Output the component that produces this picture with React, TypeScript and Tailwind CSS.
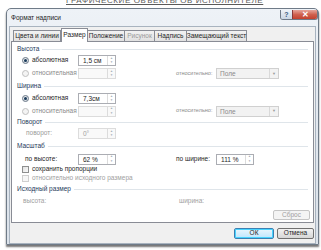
import React from 'react';

const tabs = [
  { label: 'Цвета и линии', w: 'w-[48px]' },
  { label: 'Размер', w: 'w-[27px]', active: true },
  { label: 'Положение', w: 'w-[37px]' },
  { label: 'Рисунок', w: 'w-[30px]', disabled: true },
  { label: 'Надпись', w: 'w-[32px]' },
  { label: 'Замещающий текст', w: 'w-[60px]' },
];

function Section({ title, h }: { title: string; h: string }) {
  return (
    <div className={`${h} flex items-center pl-[5px] pr-[5px]`}>
      <span className="whitespace-nowrap text-[#1e395b]">{title}</span>
      <div className="ml-[3px] h-px flex-1 bg-[#dfe5ea]" />
    </div>
  );
}

function Radio({ checked, disabled }: { checked?: boolean; disabled?: boolean }) {
  return (
    <span
      className={`flex h-[7px] w-[7px] shrink-0 items-center justify-center rounded-full border ${
        disabled ? 'border-[#c0c0c0] bg-[#f4f4f4]' : 'border-[#6a7888] bg-gradient-to-br from-[#f0f0f0] to-[#cfd6dd]'
      }`}
    >
      {checked && <span className="h-[3px] w-[3px] rounded-full bg-[#1a3a5a]" />}
    </span>
  );
}

function Check({ disabled }: { disabled?: boolean }) {
  return (
    <span
      className={`block h-[7px] w-[7px] shrink-0 border ${
        disabled ? 'border-[#cfcfcf] bg-[#f7f7f7]' : 'border-[#8e8f8f] bg-gradient-to-br from-[#e2e2e2] to-[#fafafa]'
      }`}
    />
  );
}

function Spin({ value, disabled, w = 'w-[38px]' }: { value?: string; disabled?: boolean; w?: string }) {
  return (
    <div
      className={`flex h-[11px] shrink-0 ${w} border ${
        disabled ? 'border-[#dcdcdc] bg-[#f9f9f9]' : 'border-[#abadb3] bg-white'
      }`}
    >
      <span
        className={`flex-1 whitespace-nowrap pl-[4px] leading-[9px] ${
          disabled ? 'text-[#a0a0a0]' : 'text-[#1e1e1e]'
        }`}
      >
        {value}
      </span>
      <div className="flex w-[8px] flex-col border-l border-[#dcdcdc]">
        <span className="flex flex-1 items-center justify-center text-[3px] leading-none text-[#a5adb6]">▲</span>
        <span className="flex flex-1 items-center justify-center text-[3px] leading-none text-[#a5adb6]">▼</span>
      </div>
    </div>
  );
}

function Select({ value }: { value: string }) {
  return (
    <div className="flex h-[11px] w-[63px] shrink-0 border border-[#d0d0d0] bg-[#f2f2f2]">
      <span className="flex-1 pl-[3px] leading-[9px] text-[#8a8a8a]">{value}</span>
      <span className="flex w-[9px] items-center justify-center border-l border-[#d9d9d9] text-[4px] text-[#9a9a9a]">
        ▼
      </span>
    </div>
  );
}

export default function App() {
  return (
    <div
      className="relative h-[250px] w-[321px] overflow-hidden bg-white text-[6.5px] leading-none text-[#262626]"
      style={{ fontFamily: '"Liberation Sans", Arial, sans-serif' }}
    >
      {/* document text behind the dialog */}
      <div className="h-[8px] overflow-hidden pl-[66px]">
        <div className="-mt-[3px] whitespace-nowrap text-[8px] tracking-[0.6px] text-[#5a5a5a] underline">
          ГРАФИЧЕСКИЕ ОБЪЕКТЫ ОБ ИСПОЛНИТЕЛЕ
        </div>
      </div>

      {/* dialog window */}
      <div className="ml-[6px] flex h-[237px] w-[313px] flex-col rounded-t-[5px] border border-[#6f7b88] bg-gradient-to-b from-[#eef2f7] via-[#e2e8ef] to-[#dbe2ea] shadow-[0_2px_2px_rgba(0,0,0,0.55)]">
        {/* title bar */}
        <div className="flex h-[17px] items-start">
          <span className="mt-[6px] pl-[4px] text-[#1e1e1e]">Формат надписи</span>
          <div className="ml-auto mt-[1px] flex h-[10px] overflow-hidden rounded-b-[3px] border border-t-0 border-[#6f7b88]">
            <span className="flex w-[11px] items-center justify-center bg-gradient-to-b from-[#eef3f8] to-[#c9d6e4] text-[7px] font-bold text-[#3b5d82]">
              ?
            </span>
            <span className="flex w-[25px] items-center justify-center border-l border-[#8a3a3a] bg-gradient-to-b from-[#e6a59b] via-[#d0614f] to-[#c3412e] text-[8px] font-bold text-white">
              ✕
            </span>
          </div>
        </div>

        {/* client area */}
        <div className="mx-[2px] flex flex-1 flex-col border border-[#a8b3bf] bg-[#f0f0f0]">
          {/* tabs */}
          <div className="flex h-[14px] items-end pl-[3px] pt-[1px]">
            {tabs.map((t) =>
              t.active ? (
                <div
                  key={t.label}
                  className={`${t.w} relative z-10 -mb-px flex h-[14px] items-center justify-center whitespace-nowrap border border-b-0 border-[#898c95] bg-white`}
                >
                  {t.label}
                </div>
              ) : (
                <div
                  key={t.label}
                  className={`${t.w} flex h-[11px] items-center justify-center whitespace-nowrap border border-b-0 border-l-0 border-[#898c95] bg-gradient-to-b from-[#f2f2f2] to-[#e1e1e1] first:border-l ${
                    t.disabled ? 'text-[#9a9a9a]' : ''
                  }`}
                >
                  {t.label}
                </div>
              )
            )}
          </div>

          {/* tab panel */}
          <div className="mx-[1px] flex h-[182px] flex-col border border-[#898c95] bg-white pt-[2px]">
            <Section title="Высота" h="h-[10px]" />
            <div className="flex h-[13px] items-center pl-[10px]">
              <Radio checked />
              <span className="ml-[3px] w-[46px]">абсолютная</span>
              <Spin value="1,5 см" />
            </div>
            <div className="flex h-[13px] items-center pl-[10px]">
              <Radio disabled />
              <span className="ml-[3px] w-[46px] text-[#8a8a8a]">относительная</span>
              <Spin disabled />
              <span className="ml-[60px] w-[40px] whitespace-nowrap text-[5.5px] text-[#8a8a8a]">относительно:</span>
              <Select value="Поле" />
            </div>

            <Section title="Ширина" h="h-[12px]" />
            <div className="flex h-[13px] items-center pl-[10px]">
              <Radio checked />
              <span className="ml-[3px] w-[46px]">абсолютная</span>
              <Spin value="7,3см" />
            </div>
            <div className="flex h-[12px] items-center pl-[10px]">
              <Radio disabled />
              <span className="ml-[3px] w-[46px] text-[#8a8a8a]">относительная</span>
              <Spin disabled />
              <span className="ml-[60px] w-[40px] whitespace-nowrap text-[5.5px] text-[#8a8a8a]">относительно:</span>
              <Select value="Поле" />
            </div>

            <Section title="Поворот" h="h-[11px]" />
            <div className="flex h-[11px] items-center pl-[14px]">
              <span className="w-[52px] text-[#9a9a9a]">поворот:</span>
              <Spin value="0°" disabled />
            </div>

            <Section title="Масштаб" h="h-[14px]" />
            <div className="flex h-[12px] items-center pl-[13px]">
              <span className="w-[53px]">по высоте:</span>
              <Spin value="62 %" />
              <span className="ml-[60px] w-[40px] whitespace-nowrap">по ширине:</span>
              <Spin value="111 %" />
            </div>
            <div className="flex h-[9px] items-center pl-[10px]">
              <Check />
              <span className="ml-[3px]">сохранить пропорции</span>
            </div>
            <div className="flex h-[9px] items-center pl-[10px]">
              <Check disabled />
              <span className="ml-[3px] text-[#a0a0a0]">относительно исходного размера</span>
            </div>

            <Section title="Исходный размер" h="h-[13px]" />
            <div className="flex h-[10px] items-center pl-[11px] text-[#a0a0a0]">
              <span className="w-[156px]">высота:</span>
              <span>ширина:</span>
            </div>
            <div className="mt-[4px] flex h-[10px] justify-end pr-[3px]">
              <div className="flex w-[37px] items-center justify-center rounded-[2px] border border-[#c5c5c5] bg-[#f4f4f4] text-[#a0a0a0]">
                Сброс
              </div>
            </div>
          </div>

          {/* dialog buttons */}
          <div className="flex flex-1 items-center justify-end gap-[3px] pr-[1px]">
            <div className="flex h-[11px] w-[40px] items-center justify-center rounded-[2px] border border-[#3c7fb1] bg-gradient-to-b from-[#eaf6fd] to-[#bee6fd] shadow-[inset_0_0_0_1px_#48d3fe]">
              ОК
            </div>
            <div className="flex h-[11px] w-[37px] items-center justify-center rounded-[2px] border border-[#707070] bg-gradient-to-b from-[#f2f2f2] to-[#d6d6d6]">
              Отмена
            </div>
          </div>
        </div>
      </div>
    </div>
  );
}
